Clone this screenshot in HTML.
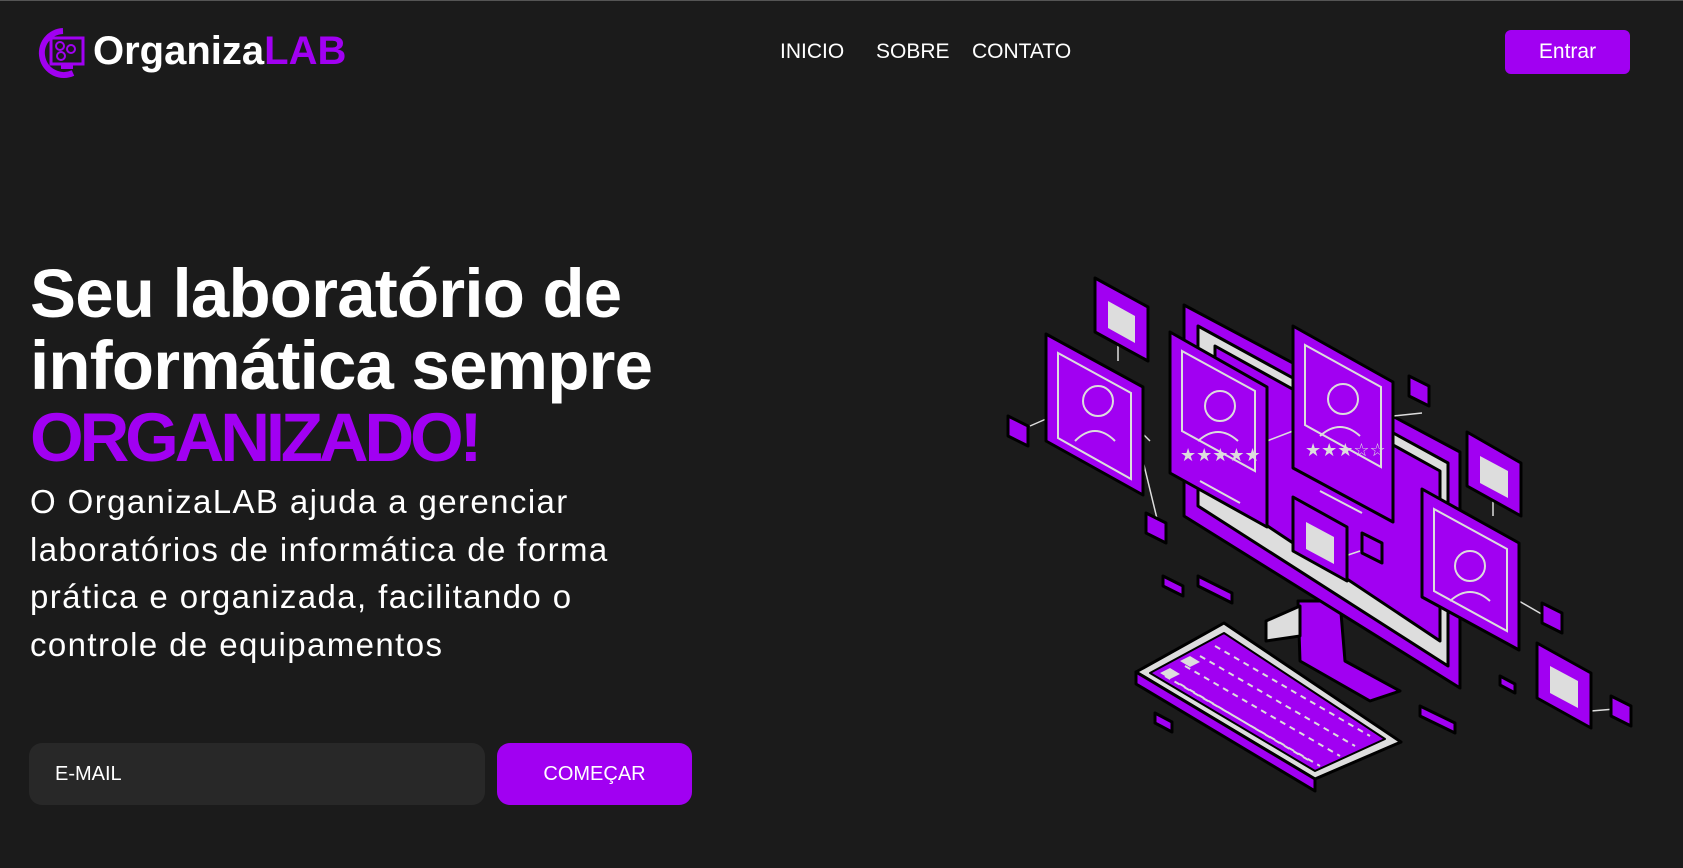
<!DOCTYPE html>
<html><head><meta charset="utf-8"><style>
*{margin:0;padding:0;box-sizing:border-box}
body{width:1683px;height:867px;background:#1b1b1b;overflow:hidden;position:relative;font-family:"Liberation Sans",sans-serif;color:#fff;border-top:1px solid #555}
.a{position:absolute}
.logo{left:93px;top:28px;font-size:40px;font-weight:bold;letter-spacing:0px}
.nav{top:39px;font-size:21px}
.btn{left:1505px;top:29px;width:125px;height:44px;background:#a100f2;border-radius:6px;font-size:21px;text-align:center;line-height:44px}
h1{position:absolute;left:30px;top:257px;font-size:69px;line-height:72px;font-weight:bold;letter-spacing:-0.8px;white-space:nowrap}
h1 span{color:#a100f2;letter-spacing:-4.2px}
p{position:absolute;left:30px;top:477px;font-size:33px;line-height:47.5px;letter-spacing:1.4px;white-space:nowrap}
.inp{left:29px;top:742px;width:456px;height:62px;background:#282828;border-radius:13px;font-size:20px;line-height:62px;padding-left:26px}
.go{left:497px;top:742px;width:195px;height:62px;background:#a100f2;border-radius:13px;font-size:20px;line-height:62px;text-align:center}
</style></head><body>
<svg class="a" style="left:33px;top:26px" width="52" height="52" viewBox="0 0 52 52">
<path d="M30 4 A22 22 0 1 0 40 46" fill="none" stroke="#a100f2" stroke-width="6"/>
<rect x="18" y="11" width="32" height="26" fill="none" stroke="#a100f2" stroke-width="3"/>
<circle cx="27" cy="19" r="4" fill="none" stroke="#a100f2" stroke-width="2"/>
<circle cx="38" cy="22" r="4" fill="none" stroke="#a100f2" stroke-width="2"/>
<circle cx="28" cy="29" r="4" fill="none" stroke="#a100f2" stroke-width="2"/>
<rect x="28" y="38" width="12" height="4" fill="#a100f2"/>
</svg>
<div class="a logo">Organiza<span style="color:#a100f2">LAB</span></div>
<div class="a nav" style="left:780px">INICIO</div>
<div class="a nav" style="left:876px">SOBRE</div>
<div class="a nav" style="left:972px">CONTATO</div>
<div class="a btn">Entrar</div>
<h1>Seu laboratório de<br>informática sempre<br><span>ORGANIZADO!</span></h1>
<p>O OrganizaLAB ajuda a gerenciar<br>laboratórios de informática de forma<br>prática e organizada, facilitando o<br>controle de equipamentos</p>
<div class="a inp">E-MAIL</div>
<div class="a go">COMEÇAR</div>
<svg class="a" style="left:0;top:0" width="1683" height="867" viewBox="0 0 1683 867">
<g stroke="#000" stroke-width="3" stroke-linejoin="round">
<polygon points="1298,600 1340,600 1345,660 1400,690 1370,700 1300,660" fill="#a100f2"/>
<polygon points="1266,620 1300,605 1300,635 1266,640" fill="#ddd"/>
<polygon points="1184,304 1460,451 1460,687 1184,515" fill="#a100f2"/>
<polygon points="1198,325 1448,462 1448,665 1198,505" fill="#ddd"/>
<polygon points="1215,345 1440,470 1440,640 1215,490" fill="#a100f2"/>
<polygon points="1136,671 1224,622 1401,741 1315,778" fill="#ddd"/>
<polygon points="1136,671 1315,778 1315,790 1136,683" fill="#a100f2"/>
<polygon points="1150,672 1224,632 1385,738 1315,770" fill="#a100f2" stroke-width="2"/>
</g>
<g fill="#ddd">
<path d="M1160 672 l10 -5 l10 6 l-10 5z M1180 660 l10 -5 l10 6 l-10 5z"/>
</g>
<g stroke="#ddd" stroke-width="2" stroke-dasharray="6 5" fill="none">
<path d="M1165 675 L1320 765 M1185 665 L1340 755 M1200 655 L1355 745 M1215 645 L1370 735 M1180 683 L1310 760"/>
</g>
<g stroke="#ddd" stroke-width="1.5" fill="none">
<path d="M1030 425 L1046 418 M1120 410 L1150 440 M1143 460 L1160 530 M1267 440 L1293 430 M1393 415 L1422 412 M1493 515 L1493 485 M1519 600 L1545 615 M1591 710 L1615 708 M1118 360 L1118 340 M1330 560 L1360 550"/>
</g>
<g stroke="#000" stroke-width="3" stroke-linejoin="round" fill="#a100f2">
<polygon points="1046,333 1143,386 1143,494 1046,440"/>
<polygon points="1170,331 1267,386 1267,526 1170,472"/>
<polygon points="1293,325 1393,381 1393,521 1293,467"/>
<polygon points="1422,488 1519,542 1519,649 1422,596"/>
<polygon points="1095,277 1148,306 1148,360 1095,331"/>
<polygon points="1467,431 1521,462 1521,515 1467,485"/>
<polygon points="1293,496 1347,526 1347,580 1293,550"/>
<polygon points="1537,642 1591,672 1591,727 1537,697"/>
<polygon points="1008,415 1028,425 1028,445 1008,435"/>
<polygon points="1146,512 1166,522 1166,542 1146,532"/>
<polygon points="1409,375 1429,385 1429,405 1409,395"/>
<polygon points="1362,532 1382,542 1382,562 1362,552"/>
<polygon points="1542,602 1562,612 1562,632 1542,622"/>
<polygon points="1611,695 1631,705 1631,725 1611,715"/>
<polygon points="1163,575 1183,585 1183,595 1163,585"/>
<polygon points="1198,575 1232,592 1232,602 1198,585"/>
<polygon points="1420,705 1455,722 1455,732 1420,715"/>
<polygon points="1155,712 1172,721 1172,731 1155,722"/>
<polygon points="1500,675 1515,683 1515,692 1500,684"/>
</g>
<g stroke="#ddd" stroke-width="2" fill="none">
<polygon points="1058,352 1131,392 1131,478 1058,437"/>
<polygon points="1182,350 1255,390 1255,470 1182,430"/>
<polygon points="1305,344 1381,386 1381,466 1305,424"/>
<polygon points="1434,508 1507,548 1507,630 1434,590"/>
<circle cx="1098" cy="400" r="15"/><path d="M1075 440 q20 -20 40 0"/>
<circle cx="1220" cy="405" r="15"/><path d="M1198 440 q20 -18 40 0"/>
<circle cx="1343" cy="398" r="15"/><path d="M1320 435 q20 -18 40 0"/>
<circle cx="1470" cy="565" r="15"/><path d="M1450 600 q20 -18 40 0"/>
<path d="M1200 480 L1240 502 M1320 490 L1362 512"/>
</g>
<g fill="#ddd">
<polygon points="1108,300 1135,315 1135,342 1108,327"/>
<polygon points="1480,455 1508,470 1508,497 1480,482"/>
<polygon points="1306,521 1334,536 1334,563 1306,548"/>
<polygon points="1550,665 1578,680 1578,707 1550,692"/>
<text x="1180" y="460" font-size="18" font-family="DejaVu Sans">★★★★★</text>
<text x="1305" y="455" font-size="18" font-family="DejaVu Sans">★★★☆☆</text>
</g>
</svg>
</body></html>
